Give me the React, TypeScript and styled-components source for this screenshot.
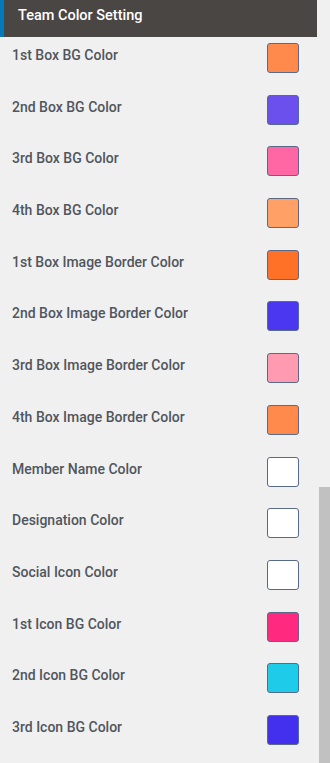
import React from "react";
import styled, { createGlobalStyle } from "styled-components";

const Global = createGlobalStyle`
  html, body { margin: 0; padding: 0; background: #f0f0f0; }
  body { font-family: Roboto, "Noto Sans", "Liberation Sans", sans-serif; overflow: hidden; }
`;

const Page = styled.div`
  position: relative;
  width: 330px;
  height: 763px;
  background: #f0f0f0;
  overflow: hidden;
`;

const Panel = styled.div`
  width: 317px;
`;

const Header = styled.div`
  height: 37px;
  box-sizing: border-box;
  background: #4a4644;
  border-left: 4px solid #0a78b4;
  padding: 6px 0 0 14px;
  color: #ffffff;
  font-size: 14.5px;
  font-weight: 500;
  line-height: 20px;
`;

const List = styled.div`
  padding-top: 6px;
  display: flex;
  flex-direction: column;
`;

const Row = styled.div`
  height: 51.7px;
  display: flex;
  align-items: flex-start;
  justify-content: space-between;
  padding: 0 18px 0 12px;
`;

const Label = styled.span`
  padding-top: 2px;
  font-size: 14px;
  font-weight: 500;
  line-height: 20px;
  color: #50565d;
`;

const Swatch = styled.div<{ $c: string }>`
  width: 32px;
  height: 30px;
  box-sizing: border-box;
  border-radius: 3px;
  border: 1px solid #586a88;
  background: ${(p) => p.$c};
`;

const Thumb = styled.div`
  position: absolute;
  right: 0;
  top: 487px;
  width: 11px;
  bottom: 0;
  background: #c1c1c1;
`;

const rows: [string, string][] = [
  ["1st Box BG Color", "#ff8a4c"],
  ["2nd Box BG Color", "#6b50ee"],
  ["3rd Box BG Color", "#ff66a4"],
  ["4th Box BG Color", "#ffa066"],
  ["1st Box Image Border Color", "#ff7126"],
  ["2nd Box Image Border Color", "#4b37ef"],
  ["3rd Box Image Border Color", "#ff9bb0"],
  ["4th Box Image Border Color", "#ff8a4c"],
  ["Member Name Color", "#ffffff"],
  ["Designation Color", "#ffffff"],
  ["Social Icon Color", "#ffffff"],
  ["1st Icon BG Color", "#ff2a80"],
  ["2nd Icon BG Color", "#1ecbe8"],
  ["3rd Icon BG Color", "#4330ee"],
];

export default function App() {
  return (
    <Page>
      <Global />
      <Panel>
        <Header>Team Color Setting</Header>
        <List>
          {rows.map(([label, c]) => (
            <Row key={label}>
              <Label>{label}</Label>
              <Swatch $c={c} />
            </Row>
          ))}
        </List>
      </Panel>
      <Thumb />
    </Page>
  );
}
